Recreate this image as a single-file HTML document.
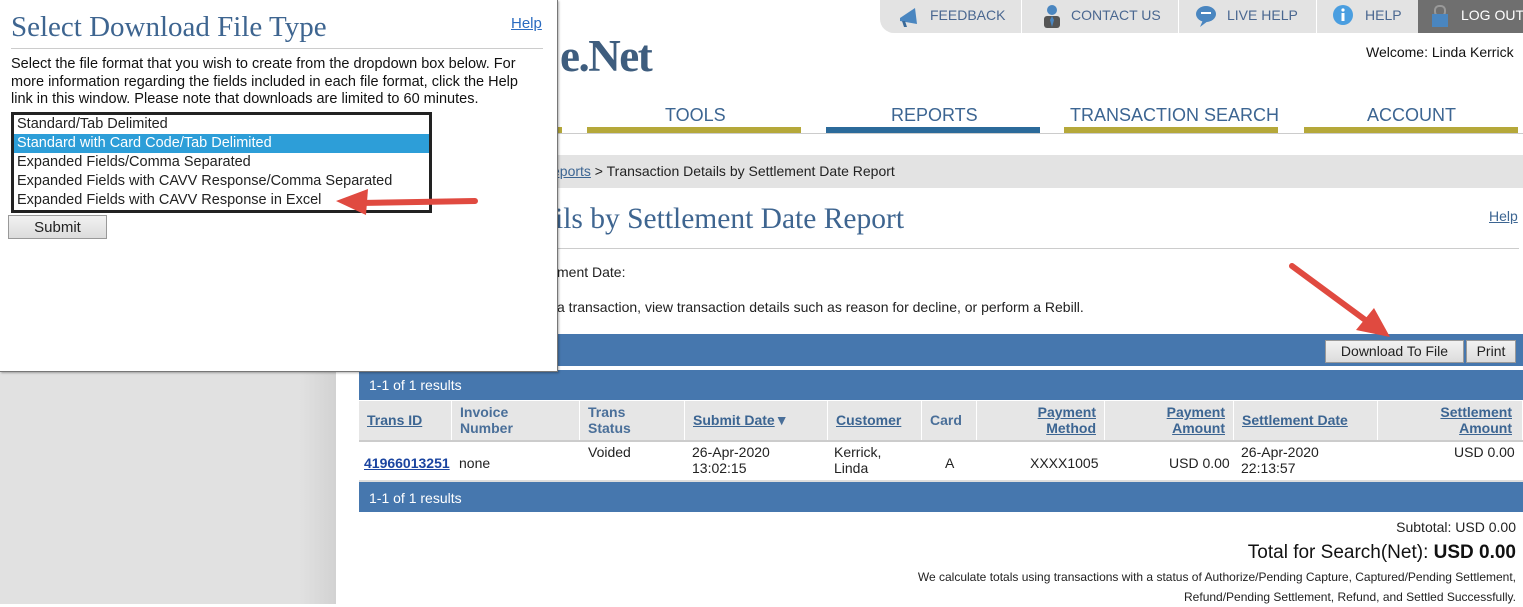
<!DOCTYPE html>
<html><head><meta charset="utf-8"><style>
*{margin:0;padding:0;box-sizing:border-box}
body{width:1523px;height:604px;overflow:hidden;background:#fff;font-family:"Liberation Sans",sans-serif;position:relative;color:#222}
.a{position:absolute;white-space:nowrap}
.n{font-size:14px}
.blue{background:#4677ae}
a,.lk{color:#3c6592;text-decoration:underline}
.th{position:absolute;top:401px;height:39px;background:#e6e6e6;border-right:1px solid #fff;font-size:14px;font-weight:bold;color:#4a6f99;padding:3px 8px;line-height:16px}
.td{position:absolute;top:444px;font-size:14px;line-height:16px}
.btn{position:absolute;background:linear-gradient(#f2f2f2,#dcdcdc);border:1px solid #999;font-size:14px;text-align:center;line-height:20px}
</style></head><body>
<div class="a" style="left:0;top:371px;width:336px;height:233px;background:linear-gradient(90deg,#e1e1e1 0,#e1e1e1 300px,#d2d2d2 336px)"></div>

<div class="a" style="left:880px;top:0;width:643px;height:33px;background:#e3e3e3;border-bottom-left-radius:14px"></div>
<div class="a" style="left:1021px;top:0;width:1px;height:33px;background:#fff"></div>
<div class="a" style="left:1178px;top:0;width:1px;height:33px;background:#fff"></div>
<div class="a" style="left:1316px;top:0;width:1px;height:33px;background:#fff"></div>
<div class="a" style="left:1418px;top:0;width:105px;height:33px;background:#6f6f6f"></div>
<svg class="a" style="left:897px;top:4px" width="24" height="24"><path d="M3 14 L18 4 L20 20 L3 17Z" fill="#4a86c0"/><path d="M5 17 l2 6 h3 l-2-6z" fill="#3a6a99"/></svg>
<div class="a n" style="left:930px;top:7px;color:#4a6790">FEEDBACK</div>
<svg class="a" style="left:1041px;top:3px" width="22" height="26"><circle cx="11" cy="7" r="5" fill="#4a86c0"/><rect x="3" y="13" width="16" height="12" rx="3" fill="#555"/><path d="M11 13 l-2 4 2 7 2-7z" fill="#4a86c0"/></svg>
<div class="a n" style="left:1071px;top:7px;color:#4a6790">CONTACT US</div>
<svg class="a" style="left:1195px;top:4px" width="24" height="24"><ellipse cx="11" cy="10" rx="10" ry="8" fill="#4a86c0"/><path d="M8 16 l-3 7 8-6z" fill="#4a86c0"/><rect x="6" y="8" width="10" height="2" fill="#fff"/></svg>
<div class="a n" style="left:1227px;top:7px;color:#4a6790">LIVE HELP</div>
<svg class="a" style="left:1332px;top:4px" width="22" height="22"><circle cx="11" cy="11" r="10" fill="#4a9ee0"/><rect x="9.5" y="9" width="3" height="8" fill="#fff"/><circle cx="11" cy="6" r="1.6" fill="#fff"/></svg>
<div class="a n" style="left:1365px;top:7px;color:#4a6790">HELP</div>
<svg class="a" style="left:1431px;top:4px" width="18" height="24"><rect x="4" y="2" width="10" height="10" rx="4" fill="none" stroke="#999" stroke-width="2"/><rect x="1" y="10" width="16" height="13" fill="#4a86c0"/></svg>
<div class="a n" style="left:1461px;top:7px;color:#fff">LOG OUT</div>

<div class="a" style="left:560px;top:30px;font-family:'Liberation Serif',serif;font-size:45px;font-weight:bold;color:#3e5d7e;letter-spacing:-1.5px">e.Net</div>
<div class="a n" style="left:1366px;top:44px;color:#111">Welcome: Linda Kerrick</div>

<div class="a" style="left:556px;top:105px;width:967px;font-size:18px;color:#3c6592">
<span class="a" style="left:109px">TOOLS</span><span class="a" style="left:335px">REPORTS</span><span class="a" style="left:514px">TRANSACTION SEARCH</span><span class="a" style="left:811px">ACCOUNT</span></div>
<div class="a" style="left:556px;top:127px;width:6px;height:6px;background:#b5a83a"></div>
<div class="a" style="left:587px;top:127px;width:214px;height:6px;background:#b5a83a"></div>
<div class="a" style="left:826px;top:127px;width:214px;height:6px;background:#2b6a9a"></div>
<div class="a" style="left:1064px;top:127px;width:214px;height:6px;background:#b5a83a"></div>
<div class="a" style="left:1304px;top:127px;width:214px;height:6px;background:#b5a83a"></div>
<div class="a" style="left:556px;top:133px;width:967px;height:1px;background:#ccc"></div>

<div class="a" style="left:556px;top:155px;width:967px;height:33px;background:#e3e3e3"></div>
<div class="a n" style="left:552px;top:163px"><span class="lk">eports</span> &gt; Transaction Details by Settlement Date Report</div>
<div class="a" style="left:555px;top:203px;font-family:'Liberation Serif',serif;font-size:29.5px;color:#3e6590">ils by Settlement Date Report</div>
<div class="a" style="left:1489px;top:208px;font-size:14px"><span class="lk">Help</span></div>
<div class="a" style="left:556px;top:248px;width:963px;height:1px;background:#ccc"></div>
<div class="a n" style="left:557px;top:264px">ment Date:</div>
<div class="a n" style="left:557px;top:299px">a transaction, view transaction details such as reason for decline, or perform a Rebill.</div>

<div class="a blue" style="left:556px;top:334px;width:967px;height:32px"></div>
<div class="btn" style="left:1325px;top:340px;width:139px;height:23px">Download To File</div>
<div class="btn" style="left:1466px;top:340px;width:50px;height:23px">Print</div>

<div class="a blue" style="left:359px;top:370px;width:1164px;height:30px"></div>
<div class="a n" style="left:369px;top:377px;color:#fff">1-1 of 1 results</div>
<div class="th" style="left:359px;width:93px;padding-top:11px"><span class="lk">Trans ID</span></div>
<div class="th" style="left:452px;width:128px">Invoice<br>Number</div>
<div class="th" style="left:580px;width:105px">Trans<br>Status</div>
<div class="th" style="left:685px;width:143px;padding-top:11px"><span class="lk">Submit Date</span>▼</div>
<div class="th" style="left:828px;width:94px;padding-top:11px"><span class="lk">Customer</span></div>
<div class="th" style="left:922px;width:55px;padding-top:11px">Card</div>
<div class="th" style="left:977px;width:128px;text-align:right"><span class="lk">Payment<br>Method</span></div>
<div class="th" style="left:1105px;width:129px;text-align:right"><span class="lk">Payment<br>Amount</span></div>
<div class="th" style="left:1234px;width:144px;padding-top:11px"><span class="lk">Settlement Date</span></div>
<div class="th" style="left:1378px;width:145px;text-align:right;padding-right:10px"><span class="lk">Settlement<br>Amount</span></div>
<div class="a" style="left:359px;top:440px;width:1164px;height:2px;background:#ccc"></div>
<div class="td" style="left:364px;top:455px;font-weight:bold"><span style="color:#1a44a0;text-decoration:underline">41966013251</span></div>
<div class="td" style="left:459px;top:455px">none</div>
<div class="td" style="left:588px">Voided</div>
<div class="td" style="left:692px">26-Apr-2020<br>13:02:15</div>
<div class="td" style="left:834px">Kerrick,<br>Linda</div>
<div class="td" style="left:945px;top:455px">A</div>
<div class="td" style="left:1030px;top:455px">XXXX1005</div>
<div class="td" style="left:1169px;top:455px">USD 0.00</div>
<div class="td" style="left:1241px">26-Apr-2020<br>22:13:57</div>
<div class="td" style="left:1454px">USD 0.00</div>
<div class="a" style="left:359px;top:480px;width:1164px;height:2px;background:#ddd"></div>
<div class="a blue" style="left:359px;top:482px;width:1164px;height:30px"></div>
<div class="a n" style="left:369px;top:490px;color:#fff">1-1 of 1 results</div>

<div class="a n" style="right:7px;top:519px">Subtotal: USD 0.00</div>
<div class="a" style="right:7px;top:542px;font-size:19px;color:#111">Total for Search(Net): <b>USD 0.00</b></div>
<div class="a" style="right:7px;top:567px;font-size:12px;text-align:right;line-height:20px">We calculate totals using transactions with a status of Authorize/Pending Capture, Captured/Pending Settlement,<br>Refund/Pending Settlement, Refund, and Settled Successfully.</div>

<div class="a" style="left:0;top:0;width:558px;height:372px;background:#fff;border-right:1px solid #777;border-bottom:1px solid #777;box-shadow:1px 1px 2px rgba(0,0,0,.3)"></div>
<div class="a" style="left:11px;top:11px;font-family:'Liberation Serif',serif;font-size:29px;color:#3e6590">Select Download File Type</div>
<div class="a" style="left:511px;top:15px;font-size:15px"><span style="color:#2a6bc0;text-decoration:underline">Help</span></div>
<div class="a" style="left:11px;top:48px;width:532px;height:1px;background:#ccc"></div>
<div class="a" style="left:11px;top:56px;font-size:14.5px;line-height:17.5px;color:#111">Select the file format that you wish to create from the dropdown box below. For<br>more information regarding the fields included in each file format, click the Help<br>link in this window. Please note that downloads are limited to 60 minutes.</div>
<div class="a" style="left:11px;top:112px;width:421px;height:101px;border:3px solid #222;background:#fff;font-size:14.5px;line-height:19px">
<div style="padding-left:3px;height:19px">Standard/Tab Delimited</div>
<div style="padding-left:3px;height:19px;background:#2d9ed8;color:#fff">Standard with Card Code/Tab Delimited</div>
<div style="padding-left:3px;height:19px">Expanded Fields/Comma Separated</div>
<div style="padding-left:3px;height:19px">Expanded Fields with CAVV Response/Comma Separated</div>
<div style="padding-left:3px;height:19px">Expanded Fields with CAVV Response in Excel</div>
</div>
<div class="btn" style="left:8px;top:215px;width:99px;height:24px;font-size:15px;line-height:23px">Submit</div>

<svg class="a" style="left:0;top:0" width="1523" height="604">
<line x1="475" y1="201" x2="360" y2="203" stroke="#e04a40" stroke-width="6" stroke-linecap="round"/>
<path d="M336 201 L368 189 L366 215 Z" fill="#e04a40"/>
<line x1="1292" y1="266" x2="1368" y2="322" stroke="#e04a40" stroke-width="6" stroke-linecap="round"/>
<path d="M1390 337 L1356 330 L1374 308 Z" fill="#e04a40"/>
</svg>
</body></html>
